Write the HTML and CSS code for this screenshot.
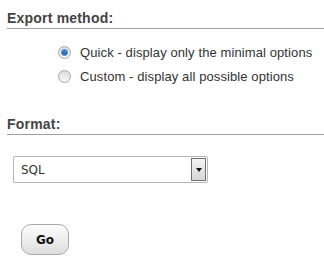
FILE: index.html
```html
<!DOCTYPE html>
<html lang="en">
<head>
  <meta charset="UTF-8" />
  <meta name="viewport" content="width=device-width, initial-scale=1.0" />
  <title>Export</title>
  <link rel="stylesheet" href="styles.css">
</head>
<body>
  <div class="export-form">
    <h3 class="section-title">Export method:</h3>
    <ul class="radio-list">
      <li class="radio-row">
        <span class="radio checked"></span>
        <span class="radio-label">Quick - display only the minimal options</span>
      </li>
      <li class="radio-row">
        <span class="radio"></span>
        <span class="radio-label">Custom - display all possible options</span>
      </li>
    </ul>

    <h3 class="section-title format-title">Format:</h3>
    <div class="select-box">
      <span class="select-value">SQL</span>
      <span class="select-arrow"><span class="triangle"></span></span>
    </div>

    <button class="go-btn">Go</button>
  </div>
</body>
</html>
```

FILE: styles.css
```css
body {
  margin: 0;
  padding: 0;
  background-color: #fff;
  font-family: "Liberation Sans", Arial, sans-serif;
  color: #333;
}
.export-form {
  padding-top: 10px;
}
.section-title {
  margin: 0 0 0 7px;
  font-size: 14px;
  line-height: 16px;
  font-weight: bold;
  letter-spacing: 0.2px;
  color: #444;
  padding-bottom: 2px;
  border-bottom: 1px solid #a0a0a0;
}
.format-title {
  margin-top: 28px;
}
.radio-list {
  list-style: none;
  margin: 11px 0 0 0;
  padding: 0 0 0 58px;
}
.radio-row {
  display: flex;
  align-items: center;
  height: 24px;
  gap: 9px;
}
/* radio buttons drawn by hand */
.radio {
  width: 11px;
  height: 11px;
  border-radius: 50%;
  border: 1px solid #a8a8a8;
  background: linear-gradient(#dcdcdc, #f8f8f8);
  display: flex;
  align-items: center;
  justify-content: center;
}
.radio.checked::after {
  content: "";
  width: 5px;
  height: 5px;
  border-radius: 50%;
  background: radial-gradient(circle at 50% 40%, #3f8ce0, #0c3f86);
  box-shadow: 0 0 0 1px #5b9ad6;
}
.radio-label {
  font-size: 13px;
  letter-spacing: 0.1px;
  color: #333;
}
.select-box {
  margin: 21px 0 0 13px;
  width: 193px;
  height: 25px;
  border: 1px solid #b5b5b5;
  border-radius: 2px;
  display: flex;
  align-items: center;
  justify-content: space-between;
}
.select-value {
  font-family: "DejaVu Sans", Verdana, sans-serif;
  font-size: 12px;
  padding-left: 7px;
  color: #333;
}
.select-arrow {
  width: 13px;
  height: 21px;
  margin-right: 1px;
  border: 1px solid #707070;
  background: linear-gradient(#f4f4f4, #d6d6d6);
  display: flex;
  align-items: center;
  justify-content: center;
}
.triangle {
  width: 0;
  height: 0;
  border-left: 3px solid transparent;
  border-right: 3px solid transparent;
  border-top: 4px solid #111;
}
.go-btn {
  display: block;
  margin: 41px 0 0 21px;
  width: 48px;
  height: 31px;
  border: 1px solid #aaa;
  border-radius: 10px;
  background: linear-gradient(#fdfdfd, #dedede);
  font-family: "DejaVu Sans", Tahoma, sans-serif;
  font-size: 12px;
  font-weight: bold;
  color: #111;
  cursor: pointer;
}
```
